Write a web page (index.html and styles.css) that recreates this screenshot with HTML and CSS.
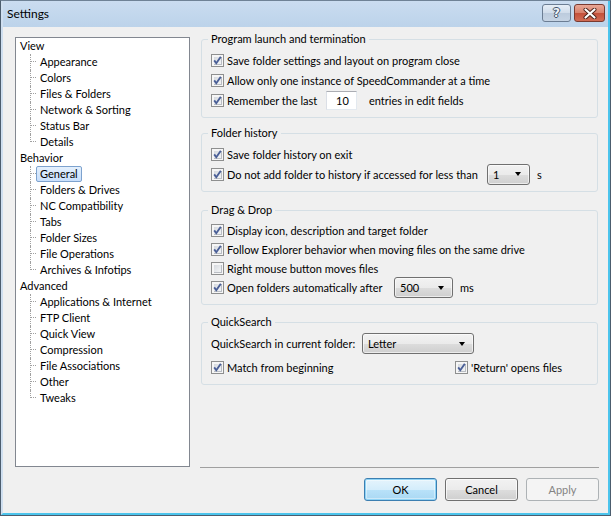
FILE: index.html
```html
<!DOCTYPE html>
<html>
<head>
<meta charset="utf-8">
<title>Settings</title>
<link rel="stylesheet" href="styles.css">
</head>
<body>
<div class="window">
  <div class="frame">
    <div class="titlebar">
      <span class="title">Settings</span>
      <div class="caps">
        <span class="cap help">?</span>
        <span class="cap close"><svg width="14" height="11" viewBox="0 0 14 11"><path d="M2.5 1.5 L11.5 9.5 M11.5 1.5 L2.5 9.5" stroke="#4a2018" stroke-width="4" stroke-linecap="round" fill="none"/><path d="M2.5 1.5 L11.5 9.5 M11.5 1.5 L2.5 9.5" stroke="#ffffff" stroke-width="2.2" stroke-linecap="round" fill="none"/></svg></span>
      </div>
    </div>
    <div class="client">
      <div class="main">
        <div class="tree">
          <div class="node">View</div>
          <div class="leaf"><span class="twig"><i></i></span><span class="lbl">Appearance</span></div>
          <div class="leaf"><span class="twig"><i></i></span><span class="lbl">Colors</span></div>
          <div class="leaf"><span class="twig"><i></i></span><span class="lbl">Files &amp; Folders</span></div>
          <div class="leaf"><span class="twig"><i></i></span><span class="lbl">Network &amp; Sorting</span></div>
          <div class="leaf"><span class="twig"><i></i></span><span class="lbl">Status Bar</span></div>
          <div class="leaf last"><span class="twig"><i></i></span><span class="lbl">Details</span></div>
          <div class="node">Behavior</div>
          <div class="leaf"><span class="twig"><i></i></span><span class="lbl sel">General</span></div>
          <div class="leaf"><span class="twig"><i></i></span><span class="lbl">Folders &amp; Drives</span></div>
          <div class="leaf"><span class="twig"><i></i></span><span class="lbl">NC Compatibility</span></div>
          <div class="leaf"><span class="twig"><i></i></span><span class="lbl">Tabs</span></div>
          <div class="leaf"><span class="twig"><i></i></span><span class="lbl">Folder Sizes</span></div>
          <div class="leaf"><span class="twig"><i></i></span><span class="lbl">File Operations</span></div>
          <div class="leaf last"><span class="twig"><i></i></span><span class="lbl">Archives &amp; Infotips</span></div>
          <div class="node">Advanced</div>
          <div class="leaf"><span class="twig"><i></i></span><span class="lbl">Applications &amp; Internet</span></div>
          <div class="leaf"><span class="twig"><i></i></span><span class="lbl">FTP Client</span></div>
          <div class="leaf"><span class="twig"><i></i></span><span class="lbl">Quick View</span></div>
          <div class="leaf"><span class="twig"><i></i></span><span class="lbl">Compression</span></div>
          <div class="leaf"><span class="twig"><i></i></span><span class="lbl">File Associations</span></div>
          <div class="leaf"><span class="twig"><i></i></span><span class="lbl">Other</span></div>
          <div class="leaf last"><span class="twig"><i></i></span><span class="lbl">Tweaks</span></div>
        </div>
        <div class="pane">
          <fieldset class="group g1">
            <legend>Program launch and termination</legend>
            <div class="row"><span class="cb on"><svg width="11" height="11" viewBox="0 0 11 11"><path d="M2.2 5.4 L4.3 8.2 L8.8 1.8" stroke="#4a5f97" stroke-width="1.9" fill="none"/></svg></span><span>Save folder settings and layout on program close</span></div>
            <div class="row"><span class="cb on"><svg width="11" height="11" viewBox="0 0 11 11"><path d="M2.2 5.4 L4.3 8.2 L8.8 1.8" stroke="#4a5f97" stroke-width="1.9" fill="none"/></svg></span><span>Allow only one instance of SpeedCommander at a time</span></div>
            <div class="row"><span class="cb on"><svg width="11" height="11" viewBox="0 0 11 11"><path d="M2.2 5.4 L4.3 8.2 L8.8 1.8" stroke="#4a5f97" stroke-width="1.9" fill="none"/></svg></span><span class="lead l-remember">Remember the last</span><span class="edit">10</span><span class="after a-entries">entries in edit fields</span></div>
          </fieldset>
          <fieldset class="group g2">
            <legend>Folder history</legend>
            <div class="row"><span class="cb on"><svg width="11" height="11" viewBox="0 0 11 11"><path d="M2.2 5.4 L4.3 8.2 L8.8 1.8" stroke="#4a5f97" stroke-width="1.9" fill="none"/></svg></span><span>Save folder history on exit</span></div>
            <div class="row"><span class="cb on"><svg width="11" height="11" viewBox="0 0 11 11"><path d="M2.2 5.4 L4.3 8.2 L8.8 1.8" stroke="#4a5f97" stroke-width="1.9" fill="none"/></svg></span><span class="lead l-donot">Do not add folder to history if accessed for less than</span><span class="combo c-one"><span class="val">1</span><span class="arrow"></span></span><span class="after a-unit">s</span></div>
          </fieldset>
          <fieldset class="group g3">
            <legend>Drag &amp; Drop</legend>
            <div class="row tight"><span class="cb on"><svg width="11" height="11" viewBox="0 0 11 11"><path d="M2.2 5.4 L4.3 8.2 L8.8 1.8" stroke="#4a5f97" stroke-width="1.9" fill="none"/></svg></span><span>Display icon, description and target folder</span></div>
            <div class="row tight"><span class="cb on"><svg width="11" height="11" viewBox="0 0 11 11"><path d="M2.2 5.4 L4.3 8.2 L8.8 1.8" stroke="#4a5f97" stroke-width="1.9" fill="none"/></svg></span><span>Follow Explorer behavior when moving files on the same drive</span></div>
            <div class="row tight"><span class="cb"></span><span>Right mouse button moves files</span></div>
            <div class="row tight"><span class="cb on"><svg width="11" height="11" viewBox="0 0 11 11"><path d="M2.2 5.4 L4.3 8.2 L8.8 1.8" stroke="#4a5f97" stroke-width="1.9" fill="none"/></svg></span><span class="lead l-open">Open folders automatically after</span><span class="combo c-500"><span class="val">500</span><span class="arrow"></span></span><span class="after a-unit">ms</span></div>
          </fieldset>
          <fieldset class="group g4">
            <legend>QuickSearch</legend>
            <div class="row combo-row"><span class="qlabel">QuickSearch in current folder:</span><span class="combo c-letter"><span class="val">Letter</span><span class="arrow"></span></span></div>
            <div class="row">
              <span class="pair"><span class="cb on"><svg width="11" height="11" viewBox="0 0 11 11"><path d="M2.2 5.4 L4.3 8.2 L8.8 1.8" stroke="#4a5f97" stroke-width="1.9" fill="none"/></svg></span><span>Match from beginning</span></span>
              <span class="pair"><span class="cb on"><svg width="11" height="11" viewBox="0 0 11 11"><path d="M2.2 5.4 L4.3 8.2 L8.8 1.8" stroke="#4a5f97" stroke-width="1.9" fill="none"/></svg></span><span>'Return' opens files</span></span>
            </div>
          </fieldset>
          <div class="sep"></div>
        </div>
      </div>
      <div class="buttons">
        <span class="btn def">OK</span>
        <span class="btn">Cancel</span>
        <span class="btn dis">Apply</span>
      </div>
    </div>
  </div>
</div>
</body>
</html>
```

FILE: styles.css
```css
html, body {
  margin: 0;
  padding: 0;
  background: #f0f0f0;
}

body {
  font-family: Lato, "Liberation Sans", sans-serif;
  font-size: 11px;
  color: #000;
}

.window {
  width: 611px;
  height: 516px;
  box-sizing: border-box;
  border: 1px solid #4c5d6e;
  border-top-color: #6f8296;
  background: #f0f0f0;
}

.frame {
  height: 100%;
  box-sizing: border-box;
  border-left: 2px solid #cfdff0;
  border-right: 2px solid #4cc4ec;
  border-bottom: 2px solid #4cc4ec;
  display: flex;
  flex-direction: column;
}

.titlebar {
  height: 26px;
  flex: none;
  display: flex;
  align-items: flex-start;
  background: linear-gradient(#cadcf0, #bcd3ea);
  padding-left: 4px;
}

.title {
  line-height: 25px;
  font-size: 12px;
}

.caps {
  margin-left: auto;
  margin-right: 3px;
  margin-top: 3px;
  display: flex;
  gap: 3px;
}

.cap {
  height: 18px;
  box-sizing: border-box;
  border: 1px solid #6b7d93;
  border-radius: 3px;
  display: flex;
  align-items: center;
  justify-content: center;
}

.help {
  width: 29px;
  background: linear-gradient(#e6eef7, #d0dcea 50%, #bccbdd 51%, #c6d4e4);
  font-family: "DejaVu Sans", sans-serif;
  font-weight: bold;
  font-size: 12px;
  color: #eef3f8;
  text-shadow: 1px 0 0 #3f5369, -1px 0 0 #3f5369, 0 1px 0 #3f5369, 0 -1px 0 #3f5369;
}

.close {
  width: 31px;
  border-color: #7a3a30;
  background: linear-gradient(#e9a796, #d7806b 50%, #c4503a 51%, #d06c55);
}

.client {
  flex: 1;
  display: flex;
  flex-direction: column;
  padding: 10px 9px 12px 12px;
}

.main {
  height: 430px;
  display: flex;
  gap: 10px;
}

/* tree */
.tree {
  width: 175px;
  box-sizing: border-box;
  border: 1px solid #828790;
  background: #fff;
  padding-left: 4px;
}

.node {
  height: 16px;
  line-height: 16px;
}

.leaf {
  height: 16px;
  display: flex;
  align-items: flex-start;
}

.twig {
  display: block;
  margin-left: 10px;
  width: 5px;
  height: 16px;
  border-left: 1px dotted #a0a0a0;
}

.leaf.last .twig {
  height: 8px;
}

.twig i {
  display: block;
  height: 7px;
  border-bottom: 1px dotted #a0a0a0;
}

.lbl {
  display: block;
  padding: 0 3px;
  border: 1px solid transparent;
  border-radius: 2px;
  line-height: 14px;
  white-space: nowrap;
}

.lbl.sel {
  border-color: #7da2ce;
  background: linear-gradient(#e4f0fd, #c8dffc);
}

/* pane */
.pane {
  flex: 1;
  display: flex;
  flex-direction: column;
  margin-top: -6px;
  padding-top: 1px;
}

.group {
  margin: 0 1px;
  border: 1px solid #d5dfe5;
  border-radius: 3px;
  padding: 4px 9px 7px;
  min-width: 0;
}

.group legend {
  padding: 0 3px;
  margin-left: -3px;
  line-height: 14px;
}

.g2 { margin-top: 8px; }
.g3 { margin-top: 11px; }
.g4 { margin-top: 10px; }

.row {
  height: 20px;
  display: flex;
  align-items: center;
  white-space: nowrap;
}

.row.tight {
  height: 19px;
}

.row.combo-row {
  height: 21px;
  margin-bottom: 3px;
}

.cb {
  flex: none;
  width: 13px;
  height: 13px;
  box-sizing: border-box;
  border: 1px solid #8e8f8f;
  background: linear-gradient(135deg, #cdd1d7, #eef0f2 70%, #f8f8f8);
  box-shadow: inset 0 0 0 1px #f6f6f6, inset 1px 1px 0 1px #f6f6f6, inset 0 0 0 2px #b9bdc3;
  margin-right: 3px;
  display: flex;
  align-items: center;
  justify-content: center;
}

.cb svg {
  display: block;
}

.lead {
  flex: none;
}

.l-remember { width: 99px; }
.l-donot { width: 260px; }
.l-open { width: 167px; }

.edit {
  width: 31px;
  height: 19px;
  box-sizing: border-box;
  border: 1px solid #e3e9ef;
  border-top-color: #abadb3;
  border-left-color: #dbdfe6;
  background: #fff;
  text-align: center;
  line-height: 17px;
  padding-left: 2px;
}

.a-entries { margin-left: 12px; }
.a-unit { margin-left: 7px; }

.combo {
  flex: none;
  height: 21px;
  box-sizing: border-box;
  border: 1px solid #707070;
  border-radius: 3px;
  background: linear-gradient(#f2f2f2, #ebebeb 50%, #dddddd 51%, #cfcfcf);
  box-shadow: inset 0 0 0 1px rgba(255, 255, 255, 0.6);
  display: flex;
  align-items: center;
  padding: 0 8px 0 5px;
}

.combo .val {
  flex: 1;
}

.arrow {
  width: 0;
  height: 0;
  border-left: 3.5px solid transparent;
  border-right: 3.5px solid transparent;
  border-top: 4px solid #000;
}

.c-one { width: 43px; }
.c-500 { width: 59px; }
.c-letter { width: 112px; }

.qlabel {
  width: 151px;
  flex: none;
}

.pair {
  display: flex;
  align-items: center;
}

.pair:first-child {
  width: 244px;
}

.sep {
  margin-top: auto;
  margin-bottom: -1px;
  height: 1px;
  background: #a0a0a0;
}

/* buttons */
.buttons {
  margin-top: 11px;
  display: flex;
  justify-content: flex-end;
  gap: 8px;
}

.btn {
  width: 73px;
  height: 23px;
  box-sizing: border-box;
  border: 1px solid #707070;
  border-radius: 3px;
  background: linear-gradient(#f2f2f2, #ebebeb 50%, #dddddd 51%, #cfcfcf);
  box-shadow: inset 0 0 0 1px rgba(255, 255, 255, 0.7);
  display: flex;
  align-items: center;
  justify-content: center;
}

.btn.def {
  border-color: #3c7fb1;
  background: linear-gradient(#e5f4fc, #d4edfb 50%, #b9e2f9 51%, #a9d8f3);
  box-shadow: inset 0 0 0 1px #8fd3f5, inset 0 0 0 2px rgba(255, 255, 255, 0.4);
}

.btn.dis {
  border-color: #adb2b5;
  background: #f4f4f4;
  box-shadow: none;
  color: #838383;
}
```
